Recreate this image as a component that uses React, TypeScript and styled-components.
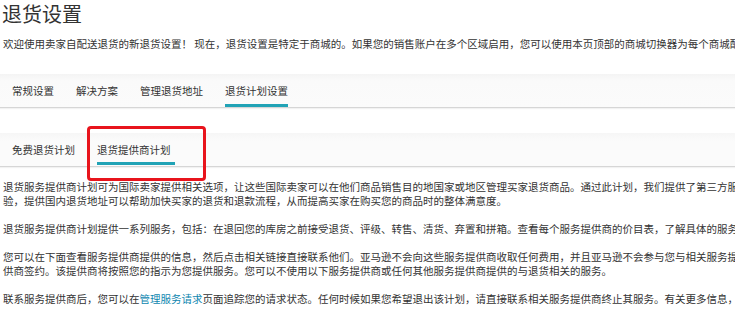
import styled, { createGlobalStyle } from 'styled-components'

const GlobalStyle = createGlobalStyle`
  html, body {
    margin: 0;
    padding: 0;
    background: #ffffff;
    overflow: hidden;
  }
  body {
    font-family: "Noto Sans CJK SC", "Noto Sans", "Liberation Sans", sans-serif;
    color: #333333;
  }
`

function App() {
  return (
    <Page>
      <GlobalStyle />
      <Title>退货设置</Title>
      <Intro>
        欢迎使用卖家自配送退货的新退货设置！ 现在，退货设置是特定于商城的。如果您的销售账户在多个区域启用，您可以使用本页顶部的商城切换器为每个商城配置退货设置。
      </Intro>

      {/* Main tabs */}
      <TabBar>
        <Tab>常规设置</Tab>
        <Tab>解决方案</Tab>
        <Tab>管理退货地址</Tab>
        <Tab $active>退货计划设置</Tab>
      </TabBar>

      {/* Sub tabs */}
      <SubTabBar>
        <SubTab>免费退货计划</SubTab>
        <SubTab $active>
          退货提供商计划
          <Highlight />
        </SubTab>
      </SubTabBar>

      <Body>
        <Para>
          退货服务提供商计划可为国际卖家提供相关选项，让这些国际卖家可以在他们商品销售目的地国家或地区管理买家退货商品。通过此计划，我们提供了第三方服务提供商的列表，这些服务提供商具有处理退货的经
          <br />
          验，提供国内退货地址可以帮助加快买家的退货和退款流程，从而提高买家在购买您的商品时的整体满意度。
        </Para>
        <Para>
          退货服务提供商计划提供一系列服务，包括：在退回您的库房之前接受退货、评级、转售、清货、弃置和拼箱。查看每个服务提供商的价目表，了解具体的服务和费用。
        </Para>
        <Para>
          您可以在下面查看服务提供商提供的信息，然后点击相关链接直接联系他们。亚马逊不会向这些服务提供商收取任何费用，并且亚马逊不会参与您与相关服务提供商之间的协议。您将直接与服务提
          <br />
          供商签约。该提供商将按照您的指示为您提供服务。您可以不使用以下服务提供商或任何其他服务提供商提供的与退货相关的服务。
        </Para>
        <Para>
          联系服务提供商后，您可以在<Link>管理服务请求</Link>页面追踪您的请求状态。任何时候如果您希望退出该计划，请直接联系相关服务提供商终止其服务。有关更多信息，请参阅帮助页面。
        </Para>
      </Body>
    </Page>
  )
}

export default App

const Page = styled.div`
  width: 1100px;
`

const Title = styled.h1`
  margin: 0;
  padding-left: 2px;
  font-size: 20px;
  line-height: 28px;
  font-weight: 400;
  color: #333333;
`

const Intro = styled.p`
  margin: 9px 0 0;
  padding-left: 3px;
  font-size: 10.5px;
  line-height: 14px;
  white-space: nowrap;
  color: #333333;
`

const TabBar = styled.div`
  display: flex;
  margin-top: 23px;
  padding-left: 1px;
  height: 33px;
  background: linear-gradient(#f4f4f4, #fafafa 20%, #fbfbfb);
  border-bottom: 1px solid #d6d6d6;
  box-shadow: 0 1px 1px rgba(0, 0, 0, 0.05);
`

const Tab = styled.div<{ $active?: boolean }>`
  display: flex;
  align-items: center;
  margin: 0 11px;
  font-size: 10.5px;
  color: #333333;
  white-space: nowrap;
  border-bottom: 3px solid ${(p) => (p.$active ? '#21a3b6' : 'transparent')};
  padding-top: 3px;
  margin-right: ${(p) => (p.$active ? '11px' : '11px')};
`

const SubTabBar = styled.div`
  display: flex;
  margin-top: 25px;
  padding-left: 1px;
  height: 33px;
  background: linear-gradient(#f6f6f6, #fbfbfb 25%, #fbfbfb);
  border-bottom: 1px solid #d6d6d6;
  box-shadow: 0 1px 1px rgba(0, 0, 0, 0.05);
`

const SubTab = styled.div<{ $active?: boolean }>`
  position: relative;
  display: flex;
  align-items: center;
  margin: 0 11px;
  padding-right: ${(p) => (p.$active ? '4px' : '0')};
  font-size: 10.5px;
  color: #333333;
  white-space: nowrap;
  border-bottom: 3px solid ${(p) => (p.$active ? '#21a3b6' : 'transparent')};
  margin-bottom: 1px;
  padding-top: 3px;
`

const Highlight = styled.span`
  position: absolute;
  left: -10px;
  top: -7px;
  width: 113px;
  height: 49px;
  border: 3px solid #e8141c;
  border-radius: 4px;
  pointer-events: none;
`

const Body = styled.div`
  margin-top: 13px;
  padding-left: 3px;
`

const Para = styled.p`
  margin: 0 0 14px;
  font-size: 10.5px;
  line-height: 14px;
  white-space: nowrap;
  color: #333333;
`

const Link = styled.span`
  color: #0f87b0;
`
